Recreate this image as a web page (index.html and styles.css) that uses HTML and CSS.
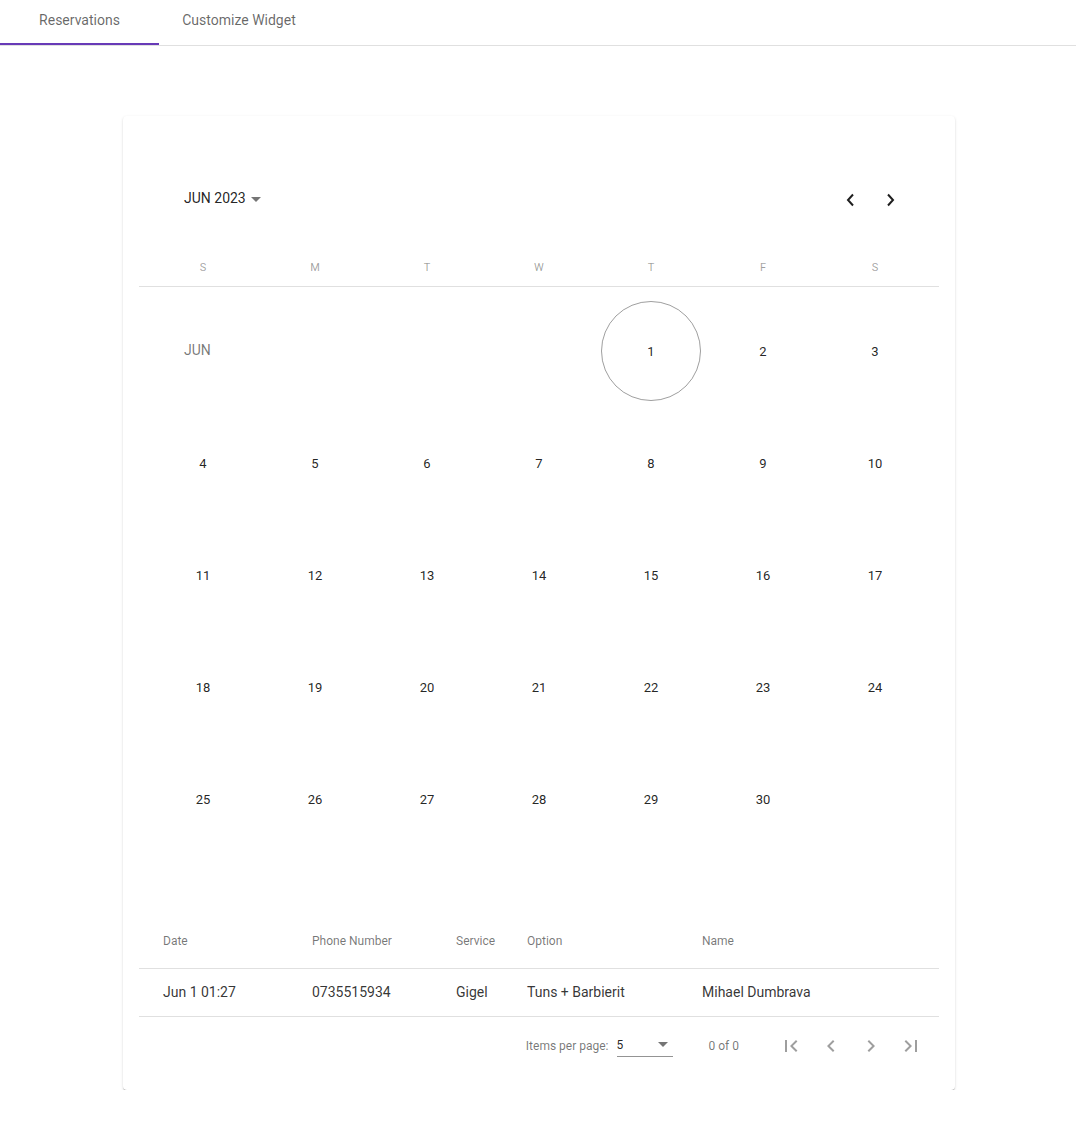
FILE: index.html
```html
<!DOCTYPE html>
<html>
<head>
<meta charset="utf-8">
<link rel="stylesheet" href="styles.css">
</head>
<body>
<nav class="tabs">
  <div class="tab active">Reservations</div>
  <div class="tab">Customize Widget</div>
</nav>

<main class="card">
  <section class="calendar">
    <div class="cal-header">
      <div class="period">JUN 2023 <span class="caret"></span></div>
      <div class="spacer"></div>
      <button class="nav-btn" aria-label="Previous month">
        <svg width="14" height="16" viewBox="0 0 14 16"><polyline points="10,2.5 5,8 10,13.5" fill="none" stroke="#1f1f1f" stroke-width="2"/></svg>
      </button>
      <button class="nav-btn" aria-label="Next month">
        <svg width="14" height="16" viewBox="0 0 14 16"><polyline points="5,2.5 10,8 5,13.5" fill="none" stroke="#1f1f1f" stroke-width="2"/></svg>
      </button>
    </div>

    <div class="weekdays">
      <span>S</span><span>M</span><span>T</span><span>W</span><span>T</span><span>F</span><span>S</span>
    </div>
    <div class="divider"></div>

    <div class="days">
      <div class="month-label">JUN</div>
      <div class="day"><span class="today">1</span></div>
      <div class="day">2</div>
      <div class="day">3</div>
      <div class="day">4</div><div class="day">5</div><div class="day">6</div><div class="day">7</div><div class="day">8</div><div class="day">9</div><div class="day">10</div>
      <div class="day">11</div><div class="day">12</div><div class="day">13</div><div class="day">14</div><div class="day">15</div><div class="day">16</div><div class="day">17</div>
      <div class="day">18</div><div class="day">19</div><div class="day">20</div><div class="day">21</div><div class="day">22</div><div class="day">23</div><div class="day">24</div>
      <div class="day">25</div><div class="day">26</div><div class="day">27</div><div class="day">28</div><div class="day">29</div><div class="day">30</div><div class="day"></div>
    </div>
  </section>

  <table class="res-table">
    <colgroup>
      <col class="c-date"><col class="c-phone"><col class="c-service"><col class="c-option"><col class="c-name">
    </colgroup>
    <thead>
      <tr><th>Date</th><th>Phone Number</th><th>Service</th><th>Option</th><th>Name</th></tr>
    </thead>
    <tbody>
      <tr><td>Jun 1 01:27</td><td>0735515934</td><td>Gigel</td><td>Tuns + Barbierit</td><td>Mihael Dumbrava</td></tr>
    </tbody>
  </table>

  <div class="paginator">
    <span class="pg-label">Items per page:</span>
    <div class="pg-select"><span>5</span><span class="caret"></span></div>
    <span class="pg-range">0 of 0</span>
    <button class="pg-btn" aria-label="First page"><svg width="24" height="24" viewBox="0 0 24 24"><path d="M18.41 16.59L13.82 12l4.59-4.59L17 6l-6 6 6 6zM6 6h2v12H6z"/></svg></button>
    <button class="pg-btn" aria-label="Previous page"><svg width="24" height="24" viewBox="0 0 24 24"><path d="M15.41 7.41L14 6l-6 6 6 6 1.41-1.41L10.83 12z"/></svg></button>
    <button class="pg-btn" aria-label="Next page"><svg width="24" height="24" viewBox="0 0 24 24"><path d="M10 6L8.59 7.41 13.17 12l-4.58 4.59L10 18l6-6z"/></svg></button>
    <button class="pg-btn" aria-label="Last page"><svg width="24" height="24" viewBox="0 0 24 24"><path d="M5.59 7.41L10.18 12l-4.59 4.59L7 18l6-6-6-6zM16 6h2v12h-2z"/></svg></button>
  </div>
</main>
</body>
</html>
```

FILE: styles.css
```css
* { box-sizing: border-box; }

body {
  margin: 0;
  font-family: Roboto, "Helvetica Neue", Arial, sans-serif;
  color: rgba(0, 0, 0, 0.87);
  background: #fff;
}

/* Tabs */
.tabs {
  display: flex;
  height: 46px;
  border-bottom: 1px solid #e0e0e0;
}
.tab {
  width: 160px;
  height: 45px;
  display: flex;
  align-items: center;
  justify-content: center;
  padding-bottom: 3px;
  font-size: 14px;
  color: rgba(0, 0, 0, 0.6);
  border-bottom: 2px solid transparent;
}
.tab.active {
  width: 159px;
  border-bottom-color: #673ab7;
}

/* Card */
.card {
  width: 832px;
  margin: 70px 0 0 calc(50% - 415px);
  padding: 16px 16px 17px;
  background: #fff;
  border-radius: 4px;
  box-shadow: 0 2px 1px -1px rgba(0,0,0,.2), 0 1px 1px 0 rgba(0,0,0,.14), 0 1px 3px 0 rgba(0,0,0,.12);
}

/* Calendar */
.calendar {
  padding: 47px 8px 8px;
}
.cal-header {
  display: flex;
  align-items: center;
  height: 40px;
  padding: 0 21px 0 37px;
}
.period {
  font-size: 14px;
  font-weight: 400;
  display: flex;
  align-items: center;
  gap: 5px;
  margin-top: -2px;
}
.caret {
  display: inline-block;
  width: 0;
  height: 0;
  border-left: 5px solid transparent;
  border-right: 5px solid transparent;
  border-top: 5px solid rgba(0, 0, 0, 0.54);
}
.period .caret { margin-top: 2px; }
.spacer { flex: 1; }
.nav-btn {
  width: 40px;
  height: 40px;
  border: 0;
  padding: 2px 0 0;
  background: transparent;
  display: flex;
  align-items: center;
  justify-content: center;
}
.weekdays {
  display: grid;
  grid-template-columns: repeat(7, 112px);
  padding: 41px 0 10px;
  line-height: 16px;
  font-size: 11px;
  color: rgba(0, 0, 0, 0.38);
  text-align: center;
}
.divider {
  height: 1px;
  margin: 0 -8px 8px;
  background: rgba(0, 0, 0, 0.12);
}
.days {
  display: grid;
  grid-template-columns: repeat(7, 112px);
  grid-auto-rows: 112px;
  font-size: 13px;
}
.month-label {
  grid-column: span 4;
  display: flex;
  align-items: center;
  padding: 0 0 2px 37px;
  font-size: 14px;
  color: rgba(0, 0, 0, 0.54);
}
.day {
  display: flex;
  align-items: center;
  justify-content: center;
}
.today {
  width: 100px;
  height: 100px;
  border-radius: 50%;
  border: 1px solid rgba(0, 0, 0, 0.38);
  display: flex;
  align-items: center;
  justify-content: center;
}

/* Table */
.res-table {
  width: 800px;
  margin-top: 50px;
  border-collapse: collapse;
  table-layout: fixed;
}
.c-date { width: 173px; }
.c-phone { width: 144px; }
.c-service { width: 71px; }
.c-option { width: 175px; }
.c-name { width: 237px; }
.res-table th {
  height: 55px;
  text-align: left;
  font-size: 12px;
  font-weight: 400;
  color: rgba(0, 0, 0, 0.54);
  padding: 2px 0 0;
  border-bottom: 1px solid rgba(0, 0, 0, 0.12);
}
.res-table td {
  height: 48px;
  padding: 0;
  font-size: 14px;
  color: rgba(0, 0, 0, 0.8);
  border-bottom: 1px solid rgba(0, 0, 0, 0.12);
}
.res-table th:first-child, .res-table td:first-child { padding-left: 24px; }

/* Paginator */
.paginator {
  display: flex;
  align-items: center;
  justify-content: flex-end;
  height: 56px;
  padding: 2px 8px 0;
  font-size: 12px;
  color: rgba(0, 0, 0, 0.54);
}
.pg-label { margin-right: 8px; }
.pg-select {
  width: 56px;
  height: 22px;
  margin-top: 1px;
  display: flex;
  align-items: center;
  justify-content: space-between;
  padding: 0 5px 2px 0;
  border-bottom: 1px solid rgba(0, 0, 0, 0.42);
  color: rgba(0, 0, 0, 0.87);
  font-size: 12px;
}
.pg-range { margin: 0 32px 0 36px; }
.pg-btn {
  width: 40px;
  height: 40px;
  border: 0;
  padding: 0;
  background: transparent;
  display: flex;
  align-items: center;
  justify-content: center;
  fill: rgba(0, 0, 0, 0.38);
}
```
